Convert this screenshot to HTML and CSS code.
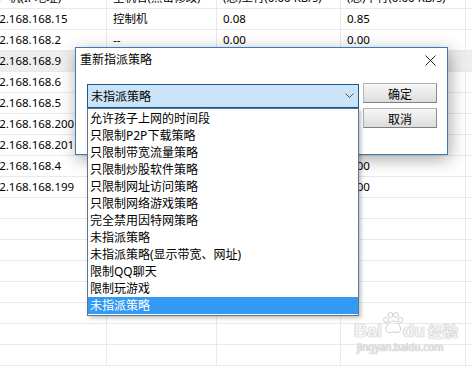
FILE: index.html
```html
<!DOCTYPE html>
<html lang="zh-CN">
<head>
    <meta charset="UTF-8">
    <title>重新指派策略</title>
    <link rel="stylesheet" href="styles.css">
</head>
<body>
    <div class="page">
        <table class="grid">
            <thead>
                <tr>
                    <th class="col-ip">客户机(IP地址)</th>
                    <th class="col-name">主机名(点击修改)</th>
                    <th class="col-up">(总)上行(0.00 KB/s)</th>
                    <th class="col-down">(总)下行(0.00 KB/s)</th>
                    <th></th>
                </tr>
            </thead>
            <tbody>
                <!-- cells hidden under the dialog are left empty -->
                <tr><td>192.168.168.15</td><td>控制机</td><td>0.08</td><td>0.85</td><td></td></tr>
                <tr><td>192.168.168.2</td><td>--</td><td>0.00</td><td>0.00</td><td></td></tr>
                <tr class="selected"><td>192.168.168.9</td><td></td><td></td><td></td><td></td></tr>
                <tr><td>192.168.168.6</td><td></td><td></td><td></td><td></td></tr>
                <tr><td>192.168.168.5</td><td></td><td></td><td></td><td></td></tr>
                <tr><td>192.168.168.200</td><td></td><td></td><td></td><td></td></tr>
                <tr><td>192.168.168.201</td><td></td><td></td><td></td><td></td></tr>
                <tr><td>192.168.168.4</td><td></td><td></td><td>0.00</td><td></td></tr>
                <tr><td>192.168.168.199</td><td></td><td></td><td>0.00</td><td></td></tr>
                <tr><td></td><td></td><td></td><td></td><td></td></tr>
                <tr><td></td><td></td><td></td><td></td><td></td></tr>
                <tr><td></td><td></td><td></td><td></td><td></td></tr>
                <tr><td></td><td></td><td></td><td></td><td></td></tr>
                <tr><td></td><td></td><td></td><td></td><td></td></tr>
                <tr><td></td><td></td><td></td><td></td><td></td></tr>
                <tr><td></td><td></td><td></td><td></td><td></td></tr>
                <tr><td></td><td></td><td></td><td></td><td></td></tr>
            </tbody>
        </table>
    </div>

    <div class="dialog">
        <div class="titlebar">
            <span class="title">重新指派策略</span>
            <span class="close">
                <svg width="11" height="11" viewBox="0 0 11 11"><path d="M0.5 0.5 L10.5 10.5 M10.5 0.5 L0.5 10.5" stroke="#222" stroke-width="1" fill="none"/></svg>
            </span>
        </div>
        <div class="dialog-body">
            <div class="combo">
                <div class="combo-box">
                    <span>未指派策略</span>
                    <svg width="9" height="6" viewBox="0 0 9 6"><path d="M0.5 0.5 L4.5 4.5 L8.5 0.5" stroke="#555" stroke-width="1" fill="none"/></svg>
                </div>
                <ul class="combo-list">
                    <li>允许孩子上网的时间段</li>
                    <li>只限制P2P下载策略</li>
                    <li>只限制带宽流量策略</li>
                    <li>只限制炒股软件策略</li>
                    <li>只限制网址访问策略</li>
                    <li>只限制网络游戏策略</li>
                    <li>完全禁用因特网策略</li>
                    <li>未指派策略</li>
                    <li>未指派策略(显示带宽、网址)</li>
                    <li>限制QQ聊天</li>
                    <li>限制玩游戏</li>
                    <li class="active">未指派策略</li>
                </ul>
            </div>
            <div class="buttons">
                <button class="btn">确定</button>
                <button class="btn">取消</button>
            </div>
        </div>
    </div>

    <div class="watermark">
        <div class="wm-logo">
            <span>Bai</span>
            <svg width="24" height="24" viewBox="0 0 24 24">
                <circle cx="5" cy="9" r="2.5" fill="none" stroke="#cfcfcf"/>
                <circle cx="9.5" cy="4" r="2.5" fill="none" stroke="#cfcfcf"/>
                <circle cx="15" cy="4" r="2.5" fill="none" stroke="#cfcfcf"/>
                <circle cx="19.5" cy="9" r="2.5" fill="none" stroke="#cfcfcf"/>
                <path d="M12.2 10 C7.5 10 4 16 5 19.5 C6 23 10.5 21 12.2 21 C14 21 18.5 23 19.5 19.5 C20.5 16 17 10 12.2 10 Z" fill="none" stroke="#cfcfcf"/>
            </svg>
            <span>du</span>
            <span class="wm-cn">经验</span>
        </div>
        <div class="wm-url">jingyan.baidu.com</div>
    </div>
</body>
</html>
```

FILE: styles.css
```css
body {
    margin: 0;
    padding: 0;
    width: 472px;
    height: 367px;
    overflow: hidden;
    background: #fff;
    font-family: "Noto Sans", "Noto Sans CJK SC", sans-serif;
    font-size: 12px;
    color: #000;
    position: relative;
}

/* table behind the dialog, scrolled a little */
.page {
    margin-top: -12px;
    margin-left: -20px;
}

.grid {
    border-collapse: collapse;
    table-layout: fixed;
    width: 520px;
}

.grid th, .grid td {
    height: 20px;
    padding: 0 0 0 6px;
    border-bottom: 1px solid #e9e9e9;
    border-right: 1px solid #e9e9e9;
    text-align: left;
    font-weight: normal;
    font-size: 11.5px;
    white-space: nowrap;
    overflow: hidden;
    line-height: 20px;
}

.grid .col-ip { width: 120px; }
.grid .col-name { width: 103px; }
.grid .col-up { width: 117px; }
.grid .col-down { width: 118px; }

.grid tr.selected td {
    background-color: #eeeeee;
}

/* dialog */
.dialog {
    position: absolute;
    left: 75px;
    top: 47px;
    width: 371px;
    height: 106px;
    background: #fff;
    border: 1px solid #3b79b0;
    box-shadow: 2px 4px 16px rgba(0,0,0,0.35);
}

.titlebar {
    height: 24px;
    display: flex;
    align-items: center;
    justify-content: space-between;
    padding-left: 4px;
}

.title {
    line-height: 24px;
}

.close {
    width: 30px;
    display: flex;
    justify-content: center;
    padding-right: 2px;
}

.dialog-body {
    display: flex;
    gap: 4px;
    padding: 12px 10px 0 11px;
}

.combo {
    position: relative;
    width: 272px;
}

.combo-box {
    box-sizing: border-box;
    height: 24px;
    background: #cce4f7;
    border: 1px solid #155a95;
    display: flex;
    align-items: center;
    justify-content: space-between;
    padding: 0 4px 0 3px;
}

.combo-list {
    position: absolute;
    left: 0;
    top: 24px;
    width: 270px;
    margin: 0;
    padding: 1px 0;
    list-style: none;
    background: #fff;
    border: 1px solid #5b7690;
    box-shadow: 2px 2px 4px rgba(0,0,0,0.25);
    z-index: 2;
}

.combo-list li {
    height: 17px;
    line-height: 17px;
    padding-left: 2px;
    white-space: nowrap;
}

.combo-list li.active {
    background: #3399f3;
    color: #fff;
}

.buttons {
    display: flex;
    flex-direction: column;
    gap: 5px;
    margin-top: -1px;
}

.btn {
    width: 74px;
    height: 20px;
    padding: 0;
    font-family: "Noto Sans CJK SC", sans-serif;
    font-size: 12px;
    color: #000;
    background: linear-gradient(#f7f7f7, #dcdcdc);
    border: 1px solid #b4b4b4;
    border-right-color: #8c8c8c;
    border-bottom-color: #7f7f7f;
    border-radius: 0;
}

/* watermark */
.watermark {
    position: absolute;
    left: 354px;
    top: 311px;
    color: #f4f4f4;
    text-shadow: 0 0 1px #b0b0b0, 0 0 1px #b0b0b0;
}

.wm-logo {
    display: flex;
    align-items: flex-end;
    font-family: "Liberation Sans", sans-serif;
    font-size: 18px;
    font-weight: bold;
    line-height: 20px;
}

.wm-logo svg {
    margin: 0 -2px 6px -1px;
}

.wm-cn {
    font-family: "Noto Sans CJK SC", sans-serif;
    font-size: 15px;
    margin-left: 3px;
}

.wm-url {
    font-size: 10px;
    line-height: 13px;
    margin-left: 3px;
    color: #ededed;
}
```
